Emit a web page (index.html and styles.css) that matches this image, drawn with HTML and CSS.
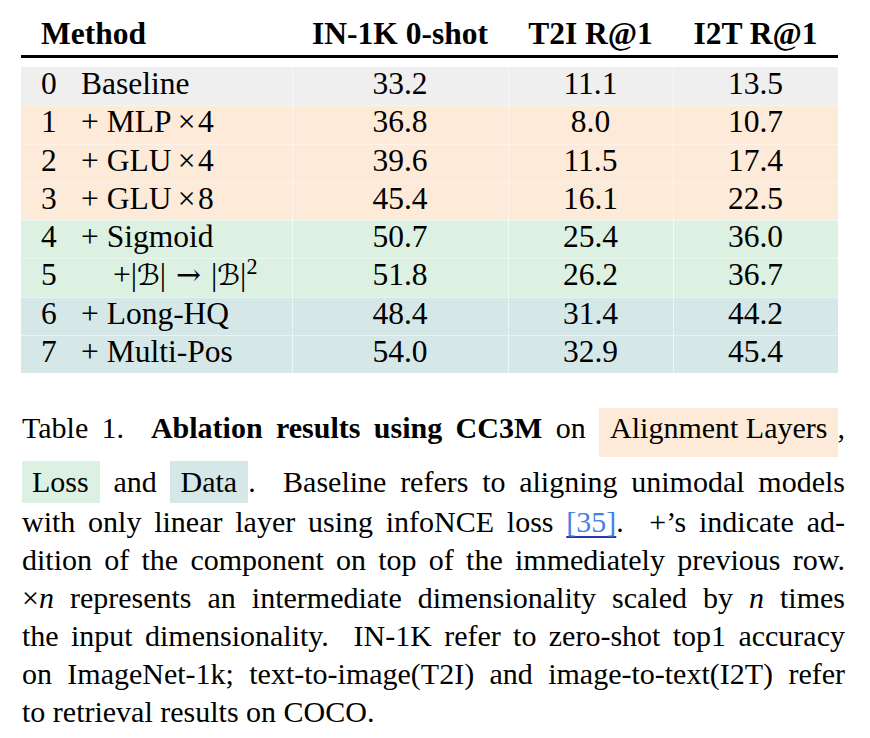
FILE: index.html
```html
<!DOCTYPE html>
<html>
<head>
<meta charset="utf-8">
<title>Table 1</title>
<link rel="stylesheet" href="styles.css">
</head>
<body>
<div class="page">
  <div class="tbl">
    <div class="head">
      <div class="c m">Method</div>
      <div class="c">IN-1K 0-shot</div>
      <div class="c">T2I R@1</div>
      <div class="c">I2T R@1</div>
    </div>
    <div class="tbody">
      <div class="row gray">
        <div class="c m"><span class="n">0</span>Baseline</div>
        <div class="c">33.2</div><div class="c">11.1</div><div class="c">13.5</div>
      </div>
      <div class="row peach">
        <div class="c m"><span class="n">1</span>+ MLP&thinsp;×&#8202;4</div>
        <div class="c">36.8</div><div class="c">8.0</div><div class="c">10.7</div>
      </div>
      <div class="row peach">
        <div class="c m"><span class="n">2</span>+ GLU&thinsp;×&#8202;4</div>
        <div class="c">39.6</div><div class="c">11.5</div><div class="c">17.4</div>
      </div>
      <div class="row peach">
        <div class="c m"><span class="n">3</span>+ GLU&thinsp;×&#8202;8</div>
        <div class="c">45.4</div><div class="c">16.1</div><div class="c">22.5</div>
      </div>
      <div class="row green">
        <div class="c m"><span class="n">4</span>+ Sigmoid</div>
        <div class="c">50.7</div><div class="c">25.4</div><div class="c">36.0</div>
      </div>
      <div class="row green">
        <div class="c m"><span class="n">5</span><span class="indent">+|<span class="cal">ℬ</span>| <span class="arr">→</span> |<span class="cal">ℬ</span>|<sup class="sq">2</sup></span></div>
        <div class="c">51.8</div><div class="c">26.2</div><div class="c">36.7</div>
      </div>
      <div class="row teal">
        <div class="c m"><span class="n">6</span>+ Long-HQ</div>
        <div class="c">48.4</div><div class="c">31.4</div><div class="c">44.2</div>
      </div>
      <div class="row teal">
        <div class="c m"><span class="n">7</span>+ Multi-Pos</div>
        <div class="c">54.0</div><div class="c">32.9</div><div class="c">45.4</div>
      </div>
    </div>
  </div>

  <div class="caption">
    <div class="ln">Table 1.&nbsp; <b>Ablation results using CC3M</b> on <span class="hl deep peach">Alignment Layers</span>,</div>
    <div class="ln"><span class="hl green">Loss</span> and <span class="hl teal">Data</span>.&nbsp; Baseline refers to aligning unimodal models</div>
    <div class="ln">with only linear layer using infoNCE loss <span class="link">[35]</span>.&nbsp; +’s indicate ad-</div>
    <div class="ln">dition of the component on top of the immediately previous row.</div>
    <div class="ln">×<i>n</i> represents an intermediate dimensionality scaled by <i>n</i> times</div>
    <div class="ln">the input dimensionality.&nbsp; IN-1K refer to zero-shot top1 accuracy</div>
    <div class="ln">on ImageNet-1k; text-to-image(T2I) and image-to-text(I2T) refer</div>
    <div class="ln last">to retrieval results on COCO.</div>
  </div>
</div>
</body>
</html>
```

FILE: styles.css
```css
* {
  box-sizing: border-box;
}

body {
  margin: 0;
  background: #ffffff;
  color: #000000;
  font-family: "Liberation Serif", "Times New Roman", serif;
}

.page {
  width: 870px;
  padding-left: 21px;
}

.tbl {
  width: 817px;
  font-size: 31.5px;
}

.head,
.row {
  display: grid;
  grid-template-columns: 271px 216px 165px 165px;
}

.head {
  height: 58px;
  padding-top: 17.4px;
  border-bottom: 3px solid #000000;
  font-weight: bold;
}

.tbody {
  margin-top: 9px;
}

.row {
  height: 38.25px;
}

.c {
  line-height: 34px;
  text-align: center;
  white-space: nowrap;
}

.c.m {
  text-align: left;
  padding-left: 20px;
}

.n {
  display: inline-block;
  width: 40px;
}

.indent {
  margin-left: 32px;
}

.cal {
  font-family: "DejaVu Serif", "DejaVu Sans", serif;
  font-style: italic;
  font-size: 0.92em;
}

.arr {
  font-family: "DejaVu Serif", serif;
  font-weight: normal;
  font-size: 0.95em;
  margin: 0 2px;
}

.sq {
  font-size: 0.7em;
  vertical-align: 11px;
  line-height: 0;
}

.row .c + .c {
  box-shadow: inset 1px 0 0 rgba(255, 255, 255, 0.55);
}

.row + .row .c {
  box-shadow: inset 0 1px 0 rgba(255, 255, 255, 0.45);
}

.row + .row .c + .c {
  box-shadow: inset 1px 0 0 rgba(255, 255, 255, 0.55), inset 0 1px 0 rgba(255, 255, 255, 0.45);
}

.gray {
  background: #efefef;
}

.peach {
  background: #fdead8;
}

.green {
  background: #ddf1e3;
}

.teal {
  background: #d5e8e7;
}

.caption {
  margin-top: 35px;
  margin-left: 1px;
  width: 823px;
  font-size: 30px;
  line-height: 38px;
}

.ln {
  text-align: justify;
  text-align-last: justify;
  word-spacing: -2px;
}

.ln.last {
  text-align-last: left;
  word-spacing: 0;
}

.hl {
  display: inline-block;
  line-height: 30px;
  padding: 6px 11px 6px 10px;
  word-spacing: 0;
  text-align-last: auto;
}

.hl.deep {
  padding: 5px 10px 14px 11px;
  margin-bottom: 4px;
}

.link {
  color: #4a7ee6;
  text-decoration: underline;
  text-decoration-color: #2237b0;
  text-decoration-thickness: 2px;
  text-underline-offset: 4px;
}
```
